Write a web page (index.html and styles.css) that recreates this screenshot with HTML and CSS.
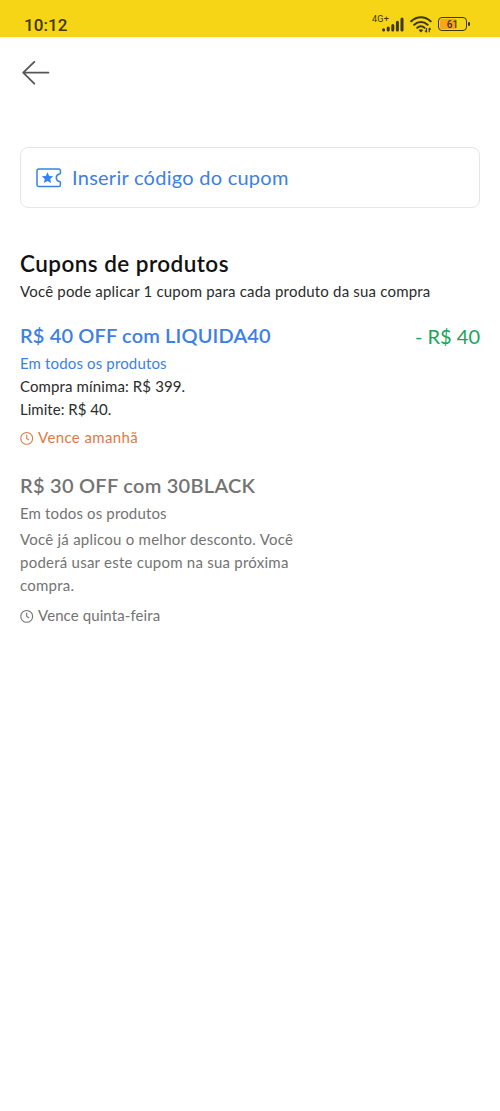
FILE: index.html
```html
<!DOCTYPE html>
<html lang="pt-BR">
<head>
<meta charset="utf-8">
<meta name="viewport" content="width=device-width, initial-scale=1">
<title>Cupons</title>
<link rel="stylesheet" href="styles.css">
</head>
<body>
<header class="status-bar">
  <span class="time">10:12</span>
  <div class="status-icons">
    <span class="network">4G+</span>
    <svg class="signal" width="22" height="15" viewBox="0 0 22 15" fill="none" stroke="#3e3708" stroke-width="3" stroke-linecap="round">
      <path d="M1.6 12.7v.2M6.2 11v1.9M10.8 8.6v4.3M15.4 5.2v7.7M20 1.9v11"/>
    </svg>
    <svg class="wifi" width="22" height="17" viewBox="0 0 22 17">
      <g fill="none" stroke="#3e3708" stroke-width="2.1" stroke-linecap="round">
        <path d="M1.2 5.2C7-.1 14.8-.1 20.6 5.2M4.2 8.7c4-3.6 9.4-3.6 13.4 0M7.3 11.8c2.2-1.9 5-1.9 7.2 0"/>
      </g>
      <path d="M8.6 14c1.3-1.1 3.3-1.1 4.6 0L10.9 16.4z" fill="#3e3708"/>
      <path d="M16.5 12v4M15 14.7l1.5 1.6M19.2 16.2v-4M20.7 13.5l-1.5-1.6" fill="none" stroke="#3e3708" stroke-width="1.2"/>
    </svg>
    <div class="battery"><span class="battery-level">61</span></div>
  </div>
</header>
<nav class="top-nav">
  <svg width="28" height="24" viewBox="0 0 28 24" fill="none" stroke="#555" stroke-width="1.8" stroke-linecap="round" stroke-linejoin="round">
    <path d="M26.4 11.6H1.2M12.3.9 1.2 11.6 12.3 22.7"/>
  </svg>
</nav>
<main class="content">
  <div class="coupon-input">
    <svg width="26" height="20" viewBox="0 0 26 20">
      <path d="M22.8 1H2.7C1.7 1 1 1.7 1 2.7v14.1c0 1 .7 1.7 1.7 1.7h20.1c1 0 1.6-.6 1.6-1.6v-2.4c0-.6-.3-.9-.9-1-2-.3-3.2-1.7-3.2-3.7s1.2-3.4 3.2-3.7c.6-.1.9-.4.9-1V2.6c0-1-.6-1.6-1.6-1.6z" fill="none" stroke="#3d80e4" stroke-width="1.5" stroke-linejoin="round"/>
      <path d="m11.5 4.2 1.7 3.7 4 .4-3 2.7.9 4-3.6-2.1L7.900 15l.9-4-3-2.700 4-.4z" fill="#3483fa"/>
    </svg>
    <span class="input-label">Inserir código do cupom</span>
  </div>
  <h1 class="heading">Cupons de produtos</h1>
  <p class="intro">Você pode aplicar 1 cupom para cada produto da sua compra</p>

  <section class="coupon">
    <div class="coupon-head">
      <h2 class="title title-main">R$ 40 OFF com LIQUIDA40</h2>
      <span class="discount">- R$ 40</span>
    </div>
    <p class="scope">Em todos os produtos</p>
    <p class="terms"><span class="minimum">Compra mínima: R$ 399.</span><br><span class="limit">Limite: R$ 40.</span></p>
    <p class="expiry">
      <svg width="14" height="14" viewBox="0 0 14 14" fill="none" stroke="currentColor" stroke-width="1.1"><circle cx="6.7" cy="7.4" r="5.9"/><path d="M6.7 3.8v3.600l2.400 1.600"/></svg>
      <span class="tomorrow">Vence amanhã</span>
    </p>
  </section>

  <section class="coupon coupon-disabled">
    <h2 class="title title-alt">R$ 30 OFF com 30BLACK</h2>
    <p class="scope">Em todos os produtos</p>
    <p class="note">Você já aplicou o melhor desconto. Você<br>poderá usar este cupom na sua próxima<br>compra.</p>
    <p class="expiry">
      <svg width="14" height="14" viewBox="0 0 14 14" fill="none" stroke="currentColor" stroke-width="1.1"><circle cx="6.7" cy="7.4" r="5.9"/><path d="M6.7 3.8v3.600l2.400 1.600"/></svg>
      <span class="thursday">Vence quinta-feira</span>
    </p>
  </section>
</main>
</body>
</html>
```
FILE: styles.css
```css
* { box-sizing: border-box; }
body {
  margin: 0;
  min-height: 1111px;
  background: #fff;
  font-family: Lato, "Liberation Sans", sans-serif;
  font-size: 15px;
  line-height: 23px;
  color: #2b2b2b;
}
h1, h2, p { margin: 0; white-space: nowrap; }
.status-bar {
  height: 37px;
  padding: 12px 33px 0 24px;
  background: #f5d516;
  display: flex;
  justify-content: space-between;
  align-items: flex-start;
  font-family: Roboto, sans-serif;
  color: #3e3708;
}
.time { font-size: 17px; font-weight: 500; line-height: 26px; letter-spacing: .1px; }
.status-icons { display: flex; align-items: flex-start; }
.network { font-size: 9px; line-height: 15px; letter-spacing: .2px; margin-right: -7px; }
.signal { margin: 5px 6px 0 0; }
.wifi { margin: 4px 6px 0 0; }
.battery {
  position: relative;
  width: 29px;
  height: 14px;
  margin-top: 5px;
  padding: 1px;
  border: 1.5px solid #3e3708;
  border-radius: 4px;
}
.battery::after {
  content: "";
  position: absolute;
  right: -4px;
  top: 4px;
  width: 2px;
  height: 4px;
  border-radius: 1px;
  background: #3e3708;
}
.battery-level {
  display: block;
  height: 10px;
  border-radius: 2px;
  background: linear-gradient(90deg, #f8a51d 62%, transparent 62%);
  font-size: 10px;
  font-weight: 500;
  line-height: 11px;
  text-align: center;
}
.top-nav { height: 110px; padding: 24px 22px; }
.top-nav svg { display: block; }
.content { padding: 0 20px; }
.coupon-input {
  height: 61px;
  padding-left: 15px;
  border: 1px solid #e6e6e6;
  border-radius: 8px;
  display: flex;
  align-items: center;
  gap: 10px;
  color: #3d80e4;
}
.input-label { padding-bottom: 2px; font-size: 20px; line-height: 28px; letter-spacing: .26px; }
.heading { margin-top: 41px; font-size: 22.5px; font-weight: 600; line-height: 29px; letter-spacing: .45px; color: #111; }
.intro { margin-top: 2px; letter-spacing: .195px; }
.coupon { margin-top: 18px; }
.coupon-head { display: flex; justify-content: space-between; color: #3d80e4; }
.title { font-size: 20px; line-height: 28px; font-weight: 600; }
.title-main { letter-spacing: .14px; }
.title-alt { margin-bottom: 3px; letter-spacing: .26px; }
.discount { font-size: 20px; line-height: 30px; color: #19a35b; }
.scope { margin-top: 1px; letter-spacing: .15px; color: #3d80e4; }
.minimum { letter-spacing: .12px; }
.limit { letter-spacing: .03px; }
.note { margin-top: 3px; letter-spacing: .24px; }
.expiry { display: flex; align-items: center; gap: 4px; margin-top: 5px; color: #e07a45; }
.tomorrow { letter-spacing: .38px; }
.thursday { letter-spacing: .1px; }
.coupon-disabled { margin-top: 22px; }
.coupon-disabled, .coupon-disabled .scope, .coupon-disabled .expiry { color: #737373; }
.coupon-disabled .expiry { margin-top: 7px; }
```
